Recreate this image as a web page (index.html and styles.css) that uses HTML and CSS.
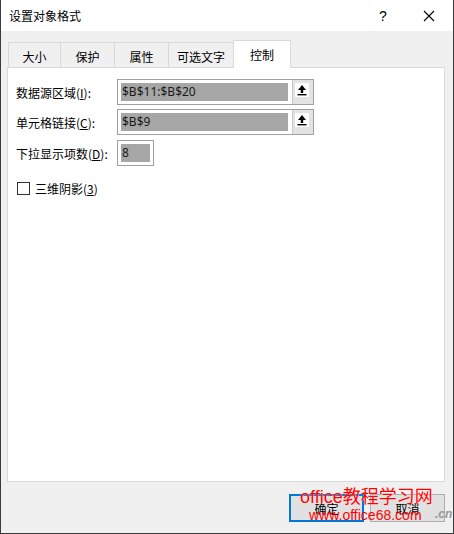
FILE: index.html
```html
<!DOCTYPE html>
<html lang="zh-CN">
<head>
    <meta charset="UTF-8">
    <title>设置对象格式</title>
    <link rel="stylesheet" href="styles.css">
</head>
<body>
    <div class="window">
        <div class="titlebar">
            <div class="title">设置对象格式</div>
            <div class="help">?</div>
            <div class="close">
                <svg width="12" height="12" viewBox="0 0 12 12"><path d="M1 1L11 11M11 1L1 11" stroke="#000" stroke-width="1.1"/></svg>
            </div>
        </div>

        <div class="dialog-body">
            <div class="tabs">
                <div class="tab t1">大小</div>
                <div class="tab t2">保护</div>
                <div class="tab t3">属性</div>
                <div class="tab t4">可选文字</div>
                <div class="tab t5 active">控制</div>
            </div>

            <div class="panel">
                <div class="row">
                    <label>数据源区域(<u>I</u>):</label>
                    <div class="ref-box">
                        <div class="ref-value">$B$11:$B$20</div>
                        <div class="ref-btn">
                            <span class="ref-icon">
                                <svg width="14" height="14" viewBox="0 0 14 14"><path d="M7 2L11 7H8.2V10H5.8V7H3Z" fill="#000"/><rect x="2.5" y="11" width="9" height="1.4" fill="#000"/></svg>
                            </span>
                        </div>
                    </div>
                </div>
                <div class="row r2">
                    <label>单元格链接(<u>C</u>):</label>
                    <div class="ref-box">
                        <div class="ref-value">$B$9</div>
                        <div class="ref-btn">
                            <span class="ref-icon">
                                <svg width="14" height="14" viewBox="0 0 14 14"><path d="M7 2L11 7H8.2V10H5.8V7H3Z" fill="#000"/><rect x="2.5" y="11" width="9" height="1.4" fill="#000"/></svg>
                            </span>
                        </div>
                    </div>
                </div>
                <div class="row r3">
                    <label>下拉显示项数(<u>D</u>):</label>
                    <div class="num-box"><div class="ref-value">8</div></div>
                </div>
                <div class="check-row">
                    <span class="checkbox"></span>
                    <span>三维阴影(<u>3</u>)</span>
                </div>
            </div>

            <div class="buttons">
                <button class="btn default">确定</button>
                <button class="btn">取消</button>
            </div>
        </div>

        <!-- 水印 -->
        <div class="wm-big">office教程学习网</div>
        <div class="wm-small">www.office68.com</div>
        <div class="wm-gray">.cn</div>
    </div>
</body>
</html>
```

FILE: styles.css
```css
body {
    margin: 0;
    font-family: "Noto Sans CJK SC", "Noto Sans", sans-serif;
    font-size: 12px;
    color: #000;
}

.window {
    position: relative;
    width: 454px;
    height: 534px;
    box-sizing: border-box;
    border: 1px solid #3c3c3c;
    border-top: none;
    background: #f0f0f0;
    display: flex;
    flex-direction: column;
}

.titlebar {
    height: 31px;
    background: #fff;
    display: flex;
    align-items: center;
    padding-left: 8px;
}

.title {
    flex: 1;
    font-size: 12px;
    line-height: 16px;
}

.help {
    width: 46px;
    text-align: center;
    font-family: "Liberation Sans", sans-serif;
    font-size: 14px;
    margin-right: 0;
}

.close {
    width: 46px;
    display: flex;
    justify-content: center;
    margin-right: 1px;
}

.dialog-body {
    flex: 1;
    padding: 9px 8px 0 6px;
    display: flex;
    flex-direction: column;
}

.tabs {
    display: flex;
    align-items: flex-end;
    height: 27px;
    padding-left: 1px;
    position: relative;
    z-index: 1;
}

.tab {
    height: 25px;
    box-sizing: border-box;
    border: 1px solid #d9d9d9;
    border-bottom: none;
    margin-right: -1px;
    display: flex;
    align-items: center;
    justify-content: center;
    padding-top: 2px;
    background: #f0f0f0;
}

.t1 { width: 53px; }
.t2 { width: 55px; }
.t3 { width: 55px; }
.t4 { width: 66px; }
.t5 { width: 58px; }

.tab.active {
    height: 28px;
    background: #fff;
    margin-bottom: -1px;
    padding-top: 0;
}

.panel {
    height: 415px;
    box-sizing: border-box;
    background: #fff;
    border: 1px solid #d9d9d9;
    padding: 11px 8px 0 8px;
}

.row {
    display: flex;
    align-items: center;
    height: 26px;
}

.row.r2 { margin-top: 4px; }
.row.r3 { margin-top: 5px; }

.row label {
    width: 101px;
    flex-shrink: 0;
}

.ref-box {
    width: 197px;
    height: 26px;
    box-sizing: border-box;
    border: 1px solid #a0a0a0;
    display: flex;
    padding: 3px 0 3px 3px;
}

.ref-value {
    flex: 1;
    background: #a6a6a6;
    color: #1a1a1a;
    font-family: "Noto Sans", sans-serif;
    font-size: 12px;
    line-height: 18px;
    padding-left: 1px;
}

.ref-btn {
    width: 21px;
    margin: -3px 0 -3px 4px;
    background: #e3e3e3;
    border-left: 1px solid #c8c8c8;
    padding: 3px 0 0 2px;
    box-sizing: border-box;
}

.ref-icon {
    display: block;
    width: 14px;
    height: 14px;
    background: #fff;
}

.ref-icon svg {
    display: block;
}

.num-box {
    width: 37px;
    height: 26px;
    box-sizing: border-box;
    border: 1px solid #a0a0a0;
    padding: 3px;
    display: flex;
}

.check-row {
    display: flex;
    align-items: center;
    gap: 5px;
    margin-top: 14px;
    padding-left: 1px;
}

.checkbox {
    width: 13px;
    height: 13px;
    box-sizing: border-box;
    border: 1px solid #333;
    background: #fff;
}

.buttons {
    display: flex;
    justify-content: flex-end;
    gap: 6px;
    margin-top: 12px;
    padding-right: 0;
}

.btn {
    width: 75px;
    height: 28px;
    box-sizing: border-box;
    border: 1px solid #adadad;
    background: #e1e1e1;
    font-family: "Noto Sans CJK SC", sans-serif;
    font-size: 12px;
    padding: 0;
}

.btn.default {
    border: 2px solid #0078d7;
}

.wm-big {
    position: absolute;
    left: 299px;
    top: 487px;
    font-family: "Liberation Sans", "Noto Sans CJK SC", sans-serif;
    font-size: 18px;
    line-height: 20px;
    color: #f00;
    text-shadow: 0 0 1px #fff;
}

.wm-small {
    position: absolute;
    left: 308px;
    top: 508px;
    font-family: "Liberation Sans", sans-serif;
    font-size: 14px;
    line-height: 14px;
    color: #f00;
}

.wm-gray {
    position: absolute;
    left: 434px;
    top: 507px;
    font-family: "Liberation Sans", sans-serif;
    font-style: italic;
    font-weight: bold;
    font-size: 12px;
    color: #999;
}
```
